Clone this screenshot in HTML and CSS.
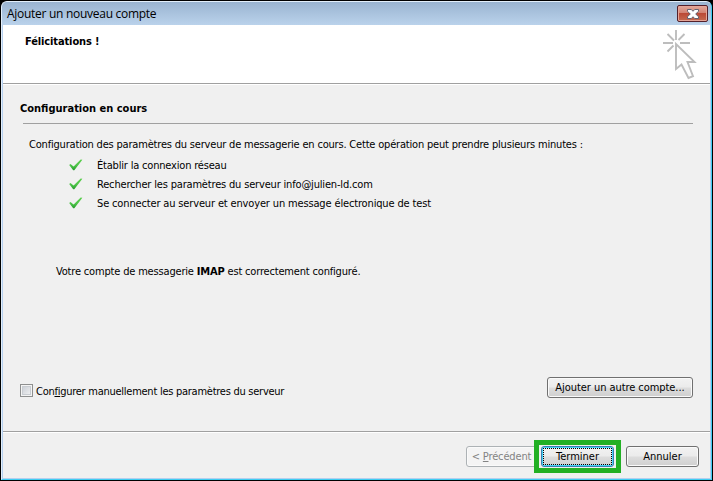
FILE: index.html
```html
<!DOCTYPE html>
<html lang="fr">
<head>
<meta charset="utf-8">
<title>Ajouter un nouveau compte</title>
<link rel="stylesheet" href="styles.css">
</head>
<body>
<svg width="0" height="0" class="defs"><defs>
<linearGradient id="green" x1="0" y1="0" x2="0" y2="1"><stop offset="0" stop-color="#5fd050"/><stop offset=".6" stop-color="#4cc248"/><stop offset="1" stop-color="#249c2c"/></linearGradient>
<symbol id="check" viewBox="0 0 14 12"><path d="M.2 6 1.500 5 4.600 7.400 11.700.4 13.400.8 5.300 11.200 4.200 11.200Z" fill="url(#green)"/></symbol>
</defs></svg>
<div class="window">
  <header class="titlebar">
    <h1 class="title"><span>Ajouter un nouveau compte</span></h1>
    <button class="close" aria-label="Fermer"><svg width="12" height="10" viewBox="0 0 12 10"><path d="M.5.5H4.300L6 2.300 7.700.5h3.800v1.800L8.700 5l2.800 2.700v1.800H7.700L6 7.700 4.300 9.500H.5V7.700L3.300 5 .5 2.300Z" fill="#fff" stroke="#56596b" stroke-width=".9"/></svg></button>
  </header>
  <div class="client">
    <section class="banner">
      <h2 class="heading t-felic"><span>Félicitations !</span></h2>
      <svg class="pointer" width="34" height="50" viewBox="0 0 34 50" fill="none" stroke="#bdbdbd" stroke-width="1.9"><path d="M13 0V10M0 13H10M17 13H27M4.500 4 11 10.500M21.500 4 15.500 10M4.500 21.500 10.500 15.500M13 14V39L18.500 34.500 25.500 48 30 46.200 24.500 32H31.500Z"/></svg>
    </section>
    <main class="content">
      <h2 class="heading"><span>Configuration en cours</span></h2>
      <hr class="rule">
      <p class="intro"><span>Configuration des paramètres du serveur de messagerie en cours. Cette opération peut prendre plusieurs minutes :</span></p>
      <ul class="steps">
        <li><svg width="14" height="12"><use href="#check"/></svg><span class="t-s1">Établir la connexion réseau</span></li>
        <li><svg width="14" height="12"><use href="#check"/></svg><span class="t-s2">Rechercher les paramètres du serveur info@julien-ld.com</span></li>
        <li><svg width="14" height="12"><use href="#check"/></svg><span class="t-s3">Se connecter au serveur et envoyer un message électronique de test</span></li>
      </ul>
      <p class="result"><span>Votre compte de messagerie <b>IMAP</b> est correctement configuré.</span></p>
      <div class="options">
        <label class="option"><span class="box"></span><span class="t-opt">Con<u>fi</u>gurer manuellement les paramètres du serveur</span></label>
        <button class="btn wide"><span>A<u>j</u>outer un autre compte...</span></button>
      </div>
    </main>
    <footer class="actions">
      <button class="btn prev"><span>&lt; <u>P</u>récédent</span></button>
      <div class="highlight"><button class="btn finish"><span>Terminer</span></button></div>
      <button class="btn cancel"><span>Annuler</span></button>
    </footer>
  </div>
</div>
</body>
</html>
```
FILE: styles.css
```css
* { box-sizing: border-box; }
body { margin: 0; background: #000; font: 11px/14px "DejaVu Sans Condensed", "DejaVu Sans", sans-serif; font-stretch: condensed; color: #000; overflow: hidden; }
h1, h2, p, ul { margin: 0; padding: 0; font-size: inherit; }
.defs { position: absolute; }
.window { width: 711px; height: 479px; margin: 1px; border: 1px solid #e3effb; border-right-color: #3fcdf2; border-bottom-color: #3fcdf2; border-radius: 6px 6px 0 0; overflow: hidden; background: #b9d1ea; }
.titlebar { height: 23px; display: flex; justify-content: space-between; align-items: flex-start; padding: 3px 3px 0 5px; background: linear-gradient(#9ab4d1, #bad2eb); }
.title { font: 12px/16px "Open Sans", sans-serif; letter-spacing: -.28px; margin-top: 1px; }
.close { width: 31px; height: 17px; padding: 0; border: 1px solid #53202b; border-radius: 2px; display: flex; align-items: center; justify-content: center; background: linear-gradient(#e3a99b 0, #d28273 45%, #bb4936 50%, #c46a50 100%); box-shadow: inset 0 0 0 1px #e5a497; }
.client { height: 454px; border: solid #b5cfee; border-width: 0 1px 1px; background: #f0f0f0; }
.banner { height: 59px; background: #fff; border-bottom: 1px solid #a0a0a0; display: flex; justify-content: space-between; padding: 5px 13px 0 22px; }
.heading { font-weight: bold; line-height: 14px; }
.t-felic { margin-top: 5px; letter-spacing: -.12px; }
.content { height: 347px; padding: 17px 17px 0 17px; border-top: 1px solid #fff; }
.rule { margin: 7px 0 14px 3px; border: 0; height: 1px; background: #a0a0a0; }
.intro { padding-left: 9px; white-space: nowrap; letter-spacing: -.19px; }
.steps { list-style: none; padding: 4px 0 0 49px; }
.steps li { height: 19px; display: flex; align-items: center; gap: 14px; white-space: nowrap; }
.steps svg { margin-top: -2px; }
.t-s1 { letter-spacing: -.19px; }
.t-s2 { letter-spacing: -.175px; }
.t-s3 { letter-spacing: -.15px; }
.result { margin: 52px 0 0 36px; letter-spacing: -.175px; }
.options { margin-top: 98px; display: flex; justify-content: space-between; align-items: flex-start; }
.option { display: flex; gap: 3px; margin-top: 7px; }
.t-opt { letter-spacing: -.26px; padding-top: 1px; }
.box { width: 13px; height: 13px; border: 1px solid #8e8f8f; background: linear-gradient(135deg, #c4c9d1, #f6f6f6); box-shadow: inset 0 0 0 1px #f4f4f4, inset 0 0 0 2px #c9cdd2; }
.btn { font: inherit; color: #000; height: 21px; padding: 0; border: 1px solid #707070; border-radius: 3px; background: linear-gradient(#f2f2f2 0, #ebebeb 49%, #dddddd 51%, #cfcfcf 100%); box-shadow: inset 0 0 0 1px #fafafa; white-space: nowrap; }
.wide { width: 146px; letter-spacing: -.06px; }
.actions { border-top: 1px solid #a0a0a0; box-shadow: inset 0 1px #fff; height: 47px; display: flex; justify-content: flex-end; padding: 8px 11px 0 0; }
.prev { width: 74px; margin: 6px -6px 0 0; padding-right: 3px; color: #838383; border-color: #adb2b5; background: #f4f4f4; letter-spacing: -.15px; }
.highlight { position: relative; width: 87px; height: 33px; border: 5px solid #22b024; margin-right: 5px; padding: 1px 2px; background: #f0f0f0; }
.finish { width: 73px; border-color: #3c7fb1; box-shadow: inset 0 0 0 1px #45d4f8; position: relative; }
.finish::after { content: ""; position: absolute; inset: 1px; border: 1px dotted #000; }
.cancel { width: 73px; margin-top: 6px; }
u { text-underline-offset: 1px; }
```
